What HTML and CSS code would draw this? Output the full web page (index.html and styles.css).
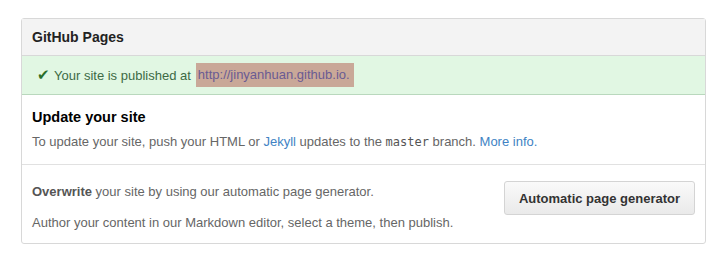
FILE: index.html
```html
<!DOCTYPE html>
<html lang="en">
<head>
    <meta charset="UTF-8">
    <title>GitHub Pages</title>
    <link rel="stylesheet" href="styles.css">
</head>
<body>

<div class="boxed-group">
    <h3 class="boxed-title">GitHub Pages</h3>

    <div class="flash-notice">
        <span class="octicon-check">&#10004;</span>
        Your site is published at <a class="published-url" href="#">http://jinyanhuan.github.io.</a>
    </div>

    <div class="boxed-section">
        <h4>Update your site</h4>
        <p class="note">To update your site, push your HTML or <a href="#">Jekyll</a> updates to the <code>master</code> branch. <a href="#">More info.</a></p>
    </div>

    <div class="boxed-section generator-row">
        <div class="generator-text">
            <p class="note"><strong>Overwrite</strong> your site by using our automatic page generator.</p>
            <p class="note">Author your content in our Markdown editor, select a theme, then publish.</p>
        </div>
        <button class="minibutton">Automatic page generator</button>
    </div>
</div>

</body>
</html>
```

FILE: styles.css
```css
body {
    margin: 0;
    padding: 18px 0 0 21px;
    font-family: "Liberation Sans", Arial, sans-serif;
    font-size: 13px;
    color: #333;
    background: #fff;
}

a {
    color: #4183c4;
    text-decoration: none;
}

.boxed-group {
    width: 683px;
    border: 1px solid #d8d8d8;
    border-radius: 3px;
    background: #fff;
}

.boxed-title {
    margin: 0;
    height: 36px;
    line-height: 36px;
    padding: 0 10px;
    font-size: 14px;
    font-weight: bold;
    color: #222;
    background: #f3f3f3;
    border-bottom: 1px solid #d8d8d8;
}

.flash-notice {
    height: 38px;
    display: flex;
    align-items: center;
    padding: 0 15px;
    color: #3d6a45;
    font-size: 13px;
    background: #e1f7e3;
    border-bottom: 1px solid #b9d8bd;
}

.octicon-check {
    color: #2a6e2a;
    font-size: 15px;
    margin-right: 4px;
}

.published-url {
    margin-left: 5px;
    padding: 4px 4px 5px 2px;
    color: #6a5b93;
    background: #c9a898;
}

.boxed-section {
    padding: 0 10px;
    border-bottom: 1px solid #e1e1e1;
}

.boxed-section:last-child {
    border-bottom: none;
}

.boxed-section h4 {
    margin: 0;
    padding-top: 14px;
    font-size: 14.5px;
    font-weight: bold;
    color: #000;
}

.note {
    margin: 0;
    color: #666;
    font-size: 13px;
}

.boxed-section h4 + .note {
    margin-top: 9px;
    padding-bottom: 15px;
}

.note strong {
    color: #555;
}

code {
    font-family: "DejaVu Sans Mono", monospace;
    font-size: 12px;
    color: #555;
}

.generator-row {
    display: flex;
    align-items: center;
    justify-content: space-between;
    height: 78px;
}

.generator-text {
    padding-top: 6px;
}

.generator-text .note + .note {
    margin-top: 16px;
}

.minibutton {
    width: 191px;
    height: 34px;
    margin-top: -12px;
    font-family: "Liberation Sans", Arial, sans-serif;
    font-size: 13px;
    font-weight: bold;
    color: #333;
    background: linear-gradient(#fafafa, #eaeaea);
    border: 1px solid #d4d4d4;
    border-radius: 3px;
}
```
